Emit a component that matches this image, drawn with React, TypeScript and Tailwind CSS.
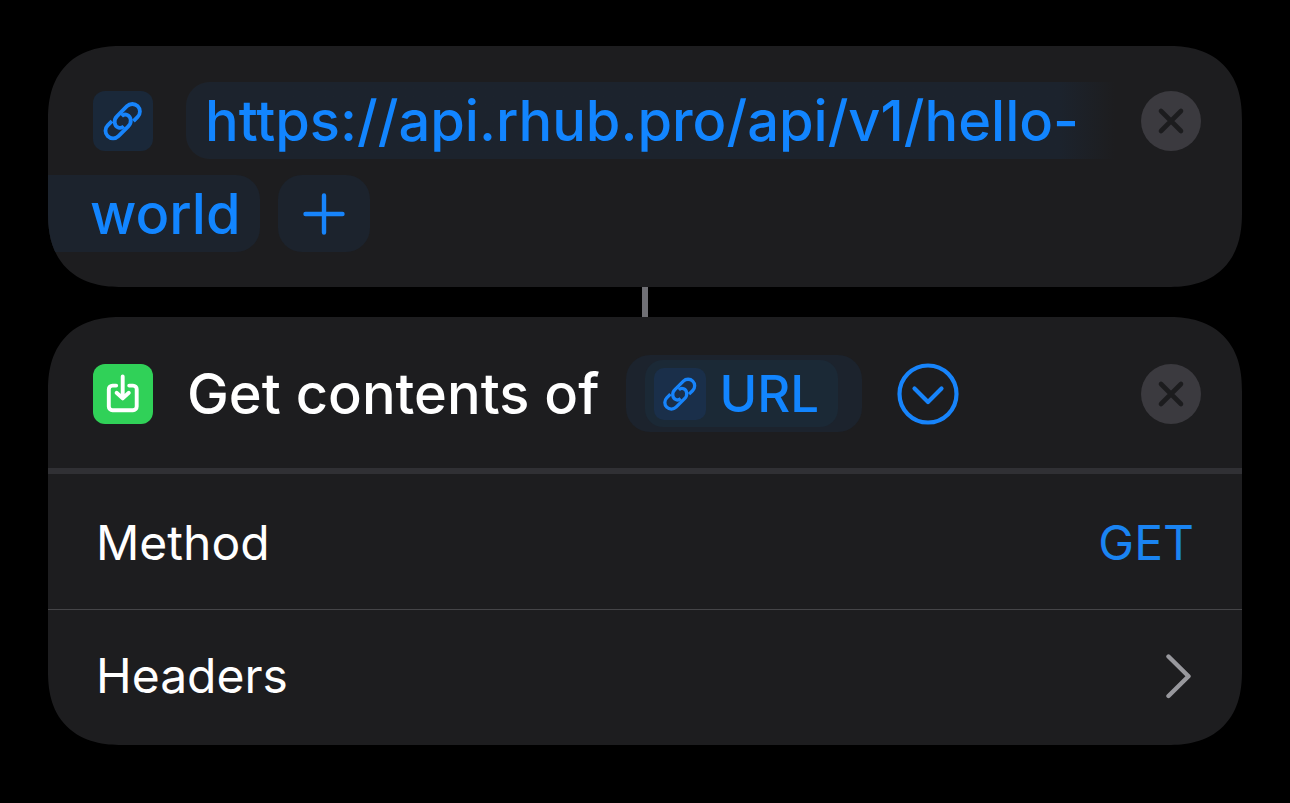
import React from "react";

function LinkIcon({ className }: { className: string }) {
  return (
    <svg viewBox="0 0 60 60" fill="none" className={className} aria-hidden="true">
      <g transform="translate(29.7 30.2) rotate(-45)" stroke="#1784fb" strokeWidth="3.8">
        <path d="M-7.6 -7.6H-13.6A7.6 7.6 0 0 0 -13.6 7.6H0.3C6 7.6 9.2 2.6 7.6 -1.2C6.800 -3.200 5.200 -4.300 2.800 -4.300" />
        <path d="M7.6 7.6H13.6A7.6 7.6 0 0 0 13.6 -7.6H-0.3C-6 -7.6 -9.2 -2.6 -7.6 1.2C-6.800 3.200 -5.200 4.300 -2.800 4.300" />
      </g>
    </svg>
  );
}

function RemoveButton({ label }: { label: string }) {
  return (
    <button type="button" aria-label={label} className="size-15 shrink-0 rounded-full bg-[#3b3a3f]">
      <svg viewBox="0 0 60 60" fill="none" className="size-15" aria-hidden="true">
        <path d="M20 20L40 40M40 20L20 40" stroke="#1c1c1e" strokeWidth="4.6" strokeLinecap="round" />
      </svg>
    </button>
  );
}

function UrlAction() {
  return (
    <section aria-label="URL" className="flex flex-col gap-4 overflow-hidden rounded-[74px] bg-[#1d1d1f] pt-9 pb-[35px] [corner-shape:superellipse(1.25)]">
      <div className="flex items-center pr-[41px] pl-[45px]">
        <span className="flex size-15 shrink-0 rounded-[12px] bg-[#1a2839]">
          <LinkIcon className="size-15" />
        </span>
        <span className="ml-[33px] h-[77px] flex-1 rounded-l-[24px] bg-linear-to-r from-[#1c232d] from-94% to-[#1d1d1f] pl-[19px] text-[56px] leading-[78px] font-medium whitespace-nowrap text-[#1285ff]">
          https://api.rhub.pro/api/v1/hello-
        </span>
        <span className="ml-[26px] flex">
          <RemoveButton label="Remove URL" />
        </span>
      </div>
      <div className="flex items-center gap-[18px]">
        <span className="h-[77px] rounded-r-[24px] bg-[#1c232d] pr-[19px] pl-[42px] text-[56px] leading-[78px] font-medium text-[#1285ff]">
          world
        </span>
        <button type="button" aria-label="Add URL" className="flex h-[77px] w-[92px] items-center justify-center rounded-[24px] bg-[#1c232d]">
          <svg viewBox="0 0 42 42" fill="none" className="size-[42px]" aria-hidden="true">
            <path d="M21 2.5V39.5M2.5 21H39.5" stroke="#1784fb" strokeWidth="4.4" strokeLinecap="round" />
          </svg>
        </button>
      </div>
    </section>
  );
}

function GetContentsAction() {
  return (
    <section aria-label="Get contents of URL" className="overflow-hidden rounded-[74px] bg-[#1d1d1f] [corner-shape:superellipse(1.25)]">
      <div className="flex h-[151px] items-center pt-0.5 pr-[41px] pl-[45px]">
        <span className="flex size-15 shrink-0 rounded-[12px] bg-[#30d158]">
          <svg viewBox="0 0 60 60" fill="none" className="size-15" aria-hidden="true">
            <g stroke="#fff" strokeWidth="3.9" strokeLinecap="round" strokeLinejoin="round">
              <path d="M23.2 21.6H19.5A3.7 3.7 0 0 0 15.8 25.3V42.5A3.7 3.7 0 0 0 19.5 46.2H40A3.7 3.7 0 0 0 43.7 42.5V25.3A3.7 3.7 0 0 0 40 21.6H36.2" />
              <path d="M29.7 12.5V34M23.6 28.8L29.7 34.4L35.8 28.8" />
            </g>
          </svg>
        </span>
        <h2 className="ml-[34px] text-[56px] leading-[78px] font-medium whitespace-nowrap text-white">
          Get contents of
        </h2>
        <button type="button" className="ml-[27px] flex h-[77px] items-center rounded-[24px] bg-[#1c232d] pr-6 pl-[19px]">
          <span className="flex h-[67px] items-center gap-[13px] rounded-[18px] bg-[#1b2936] pr-[19px] pl-[9px]">
            <span className="flex size-13 rounded-[10px] bg-[#1a2f4a]">
              <LinkIcon className="size-13" />
            </span>
            <span className="text-[51px] leading-[67px] font-medium text-[#1285ff]">URL</span>
          </span>
        </button>
        <button type="button" aria-label="Show details" className="ml-[35px] size-[62px] shrink-0">
          <svg viewBox="0 0 62 62" fill="none" className="size-[62px]" aria-hidden="true">
            <g stroke="#1784fb" strokeWidth="4.2" strokeLinecap="round" strokeLinejoin="round">
              <circle cx="31" cy="31" r="28.5" />
              <path d="M17.5 25.5L31 39L44.5 25.5" />
            </g>
          </svg>
        </button>
        <span className="ml-auto flex">
          <RemoveButton label="Remove Get contents of URL" />
        </span>
      </div>
      <div className="flex h-[141px] items-center justify-between border-t-6 border-[#303034] px-12 pt-0.5 text-[48px]">
        <span id="method" className="text-white">Method</span>
        <button type="button" aria-describedby="method" className="text-[#1a84f2]">GET</button>
      </div>
      <button type="button" className="flex h-[136px] w-full items-center justify-between border-t border-[#454548] px-12 pb-1 text-[48px] text-white">
        <span>Headers</span>
        <svg viewBox="0 0 30 46" fill="none" className="h-[46px] w-[30px]" aria-hidden="true">
          <path d="M4.5 3.5L24.5 23.2L4.5 43" stroke="#98989d" strokeWidth="4.4" strokeLinecap="round" strokeLinejoin="round" />
        </svg>
      </button>
    </section>
  );
}

export default function App() {
  return (
    <main className="flex min-h-screen flex-col bg-black px-12 pt-[46px] pb-[58px] font-['Inter',sans-serif]">
      <UrlAction />
      <div className="h-[30px] w-1.5 self-center bg-[#6f6f74]" />
      <GetContentsAction />
    </main>
  );
}
